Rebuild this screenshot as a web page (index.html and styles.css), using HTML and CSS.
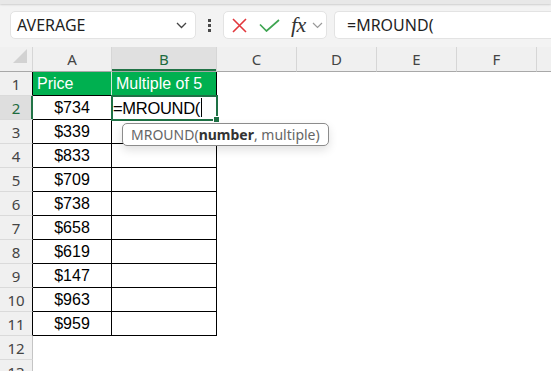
FILE: index.html
```html
<!DOCTYPE html>
<html>
<head>
    <title>MROUND</title>
    <meta name="viewport" content="width=device-width, initial-scale=1.0">
    <link rel="stylesheet" href="styles.css">
</head>
<body>
    <div class="ribbon-edge"></div>

    <div class="formula-bar">
        <div class="name-box">
            <span>AVERAGE</span>
            <svg class="chev" width="11" height="7" viewBox="0 0 11 7"><path d="M1 1 L5.5 5.5 L10 1" fill="none" stroke="#444" stroke-width="1.3"/></svg>
        </div>
        <div class="grip"><i></i><i></i><i></i></div>
        <div class="fx-buttons">
            <svg width="15" height="15" viewBox="0 0 15 15"><path d="M1 1 L14 14 M14 1 L1 14" fill="none" stroke="#e2383d" stroke-width="1.6"/></svg>
            <svg class="ok" width="21" height="13" viewBox="0 0 21 13"><path d="M1 5.5 L7.5 12 L20 1" fill="none" stroke="#3fa552" stroke-width="1.7"/></svg>
            <span class="fx">fx</span>
            <svg class="small-chev" width="11" height="7" viewBox="0 0 11 7"><path d="M1 1 L5.5 5.5 L10 1" fill="none" stroke="#9a9a9a" stroke-width="1.2"/></svg>
        </div>
        <div class="formula-input">=MROUND(</div>
    </div>

    <div class="sheet">
        <table class="grid">
            <colgroup>
                <col class="c-rh"><col class="c-a"><col class="c-b">
                <col class="c-std"><col class="c-std"><col class="c-std"><col class="c-std"><col class="c-std">
            </colgroup>
            <tr class="head">
                <th class="corner"><span class="tri"></span></th>
                <th>A</th><th class="active">B</th><th>C</th><th>D</th><th>E</th><th>F</th><th></th>
            </tr>
            <tr>
                <th class="rh edge">1</th>
                <td class="box green sep">Price</td><td class="box green">Multiple of 5</td>
                <td></td><td></td><td></td><td></td><td></td>
            </tr>
            <tr>
                <th class="rh edge active">2</th>
                <td class="box num">$734</td><td class="box editing">=MROUND(<span class="caret"></span></td>
                <td></td><td></td><td></td><td></td><td></td>
            </tr>
            <tr><th class="rh edge">3</th><td class="box num">$339</td><td class="box"></td><td></td><td></td><td></td><td></td><td></td></tr>
            <tr><th class="rh edge">4</th><td class="box num">$833</td><td class="box"></td><td></td><td></td><td></td><td></td><td></td></tr>
            <tr><th class="rh edge">5</th><td class="box num">$709</td><td class="box"></td><td></td><td></td><td></td><td></td><td></td></tr>
            <tr><th class="rh edge">6</th><td class="box num">$738</td><td class="box"></td><td></td><td></td><td></td><td></td><td></td></tr>
            <tr><th class="rh edge">7</th><td class="box num">$658</td><td class="box"></td><td></td><td></td><td></td><td></td><td></td></tr>
            <tr><th class="rh edge">8</th><td class="box num">$619</td><td class="box"></td><td></td><td></td><td></td><td></td><td></td></tr>
            <tr><th class="rh edge">9</th><td class="box num">$147</td><td class="box"></td><td></td><td></td><td></td><td></td><td></td></tr>
            <tr><th class="rh edge">10</th><td class="box num">$963</td><td class="box"></td><td></td><td></td><td></td><td></td><td></td></tr>
            <tr><th class="rh edge">11</th><td class="box num">$959</td><td class="box"></td><td></td><td></td><td></td><td></td><td></td></tr>
            <tr><th class="rh">12</th><td></td><td></td><td></td><td></td><td></td><td></td><td></td></tr>
            <tr><th class="rh">13</th><td></td><td></td><td></td><td></td><td></td><td></td><td></td></tr>
        </table>

        <!-- function hint under the edited cell -->
        <div class="tooltip">MROUND(<b>number</b>, multiple)</div>
    </div>
</body>
</html>
```

FILE: styles.css
```css
body{
  margin:0;
  background:#fff;
  font-family:"Noto Sans", Arial, sans-serif;
  overflow:hidden;
}
.ribbon-edge{
  height:4px;
  background:#e8e8e8;
  box-shadow:0 1px 2px rgba(0,0,0,0.15);
  position:relative;
}
.formula-bar{
  display:flex;
  align-items:center;
  background:#f3f3f3;
  padding:7px 0 8px 10px;
  height:28px;
}
.name-box{
  width:186px;
  height:28px;
  box-sizing:border-box;
  background:#fff;
  border:1px solid #e3e3e3;
  border-radius:5px;
  display:flex;
  align-items:center;
  padding:0 8px 0 6px;
  font-size:16px;
  color:#1f1f1f;
}
.name-box span{
  flex:1;
}
.grip{
  width:27px;
  display:flex;
  flex-direction:column;
  align-items:center;
  gap:2px;
}
.grip i{
  width:3px;
  height:3px;
  background:#4a4a4a;
}
.fx-buttons{
  width:104px;
  height:28px;
  box-sizing:border-box;
  background:#fff;
  border:1px solid #e3e3e3;
  border-radius:5px;
  display:flex;
  align-items:center;
  padding-left:8px;
}
.fx-buttons .ok{
  margin-left:12px;
}
.fx{
  font-family:"Liberation Serif", "Times New Roman", serif;
  font-style:italic;
  font-size:22px;
  color:#333;
  margin-left:11px;
  line-height:1;
  letter-spacing:-0.5px;
}
.small-chev{
  margin-left:6px;
}
.formula-input{
  flex:1;
  height:28px;
  box-sizing:border-box;
  margin-left:7px;
  background:#fff;
  border:1px solid #e3e3e3;
  border-right:none;
  border-radius:5px 0 0 5px;
  padding-left:12px;
  display:flex;
  align-items:center;
  font-size:16px;
  color:#1f1f1f;
}
.sheet{
  position:relative;
  overflow:hidden;
}
.grid{
  border-collapse:separate;
  border-spacing:0;
  table-layout:fixed;
  width:617px;
}
.c-rh{ width:33px; }
.c-a{ width:79px; }
.c-b{ width:105px; }
.c-std{ width:80px; }
.grid th, .grid td{
  box-sizing:border-box;
  padding:0;
  height:24px;
  border-right:1px solid transparent;
  border-bottom:1px solid transparent;
  white-space:nowrap;
  overflow:visible;
}
.grid td{
  font-family:"Liberation Sans", Arial, sans-serif;
  font-size:16px;
  color:#000;
}
.head th{
  height:25px;
  background:#f0f0f0;
  border-right:1px solid #d6d6d6;
  border-bottom:1px solid #a8a8a8;
  font-weight:normal;
  font-size:15px;
  color:#444;
}
.head th.active{
  background:#e0e0e0;
  color:#1e6b3e;
  box-shadow:inset 0 -2px 0 #217346;
}
.corner{
  vertical-align:bottom;
  text-align:right;
}
.tri{
  display:inline-block;
  width:0;
  height:0;
  border-left:14px solid transparent;
  border-bottom:14px solid #d2d2d2;
  margin:0 5px 4px 0;
}
.rh{
  background:#f0f0f0;
  border-right:1px solid #c4c4c4 !important;
  border-bottom:1px solid #dadada !important;
  font-weight:normal;
  font-size:15px;
  color:#444;
  text-align:center;
}
.rh.edge{
  border-right:1px solid #000 !important;
}
.rh.active{
  background:#dedede;
  color:#1e6b3e;
  border-right:1px solid #217346 !important;
  box-shadow:inset -1px 0 0 #217346;
}
.box{
  border-right:1px solid #000 !important;
  border-bottom:1px solid #000 !important;
}
.green{
  background:#00b050;
  color:#fff !important;
  padding-left:4px !important;
}
.green.sep{
  border-right:1px solid #cfe9d8 !important;
}
.num{
  text-align:center;
}
.editing{
  position:relative;
  font-size:16.5px !important;
  letter-spacing:-0.3px;
  padding-left:1px !important;
  outline:2px solid #1e7145;
  outline-offset:-1px;
}
.editing:after{
  content:"";
  position:absolute;
  right:-4px;
  bottom:-4px;
  width:5px;
  height:5px;
  background:#1e7145;
  border:1px solid #fff;
}
.caret{
  display:inline-block;
  width:1px;
  height:19px;
  margin-left:1px;
  background:#000;
  vertical-align:-3px;
}
.tooltip{
  position:absolute;
  left:122px;
  top:76px;
  height:23px;
  box-sizing:border-box;
  padding:0 8px;
  background:#fff;
  border:1px solid #8c8c8c;
  border-radius:5px;
  box-shadow:0 4px 10px rgba(0,0,0,0.12);
  font-size:14px;
  line-height:21px;
  color:#666;
  white-space:nowrap;
}
.tooltip b{
  color:#333;
}
```
